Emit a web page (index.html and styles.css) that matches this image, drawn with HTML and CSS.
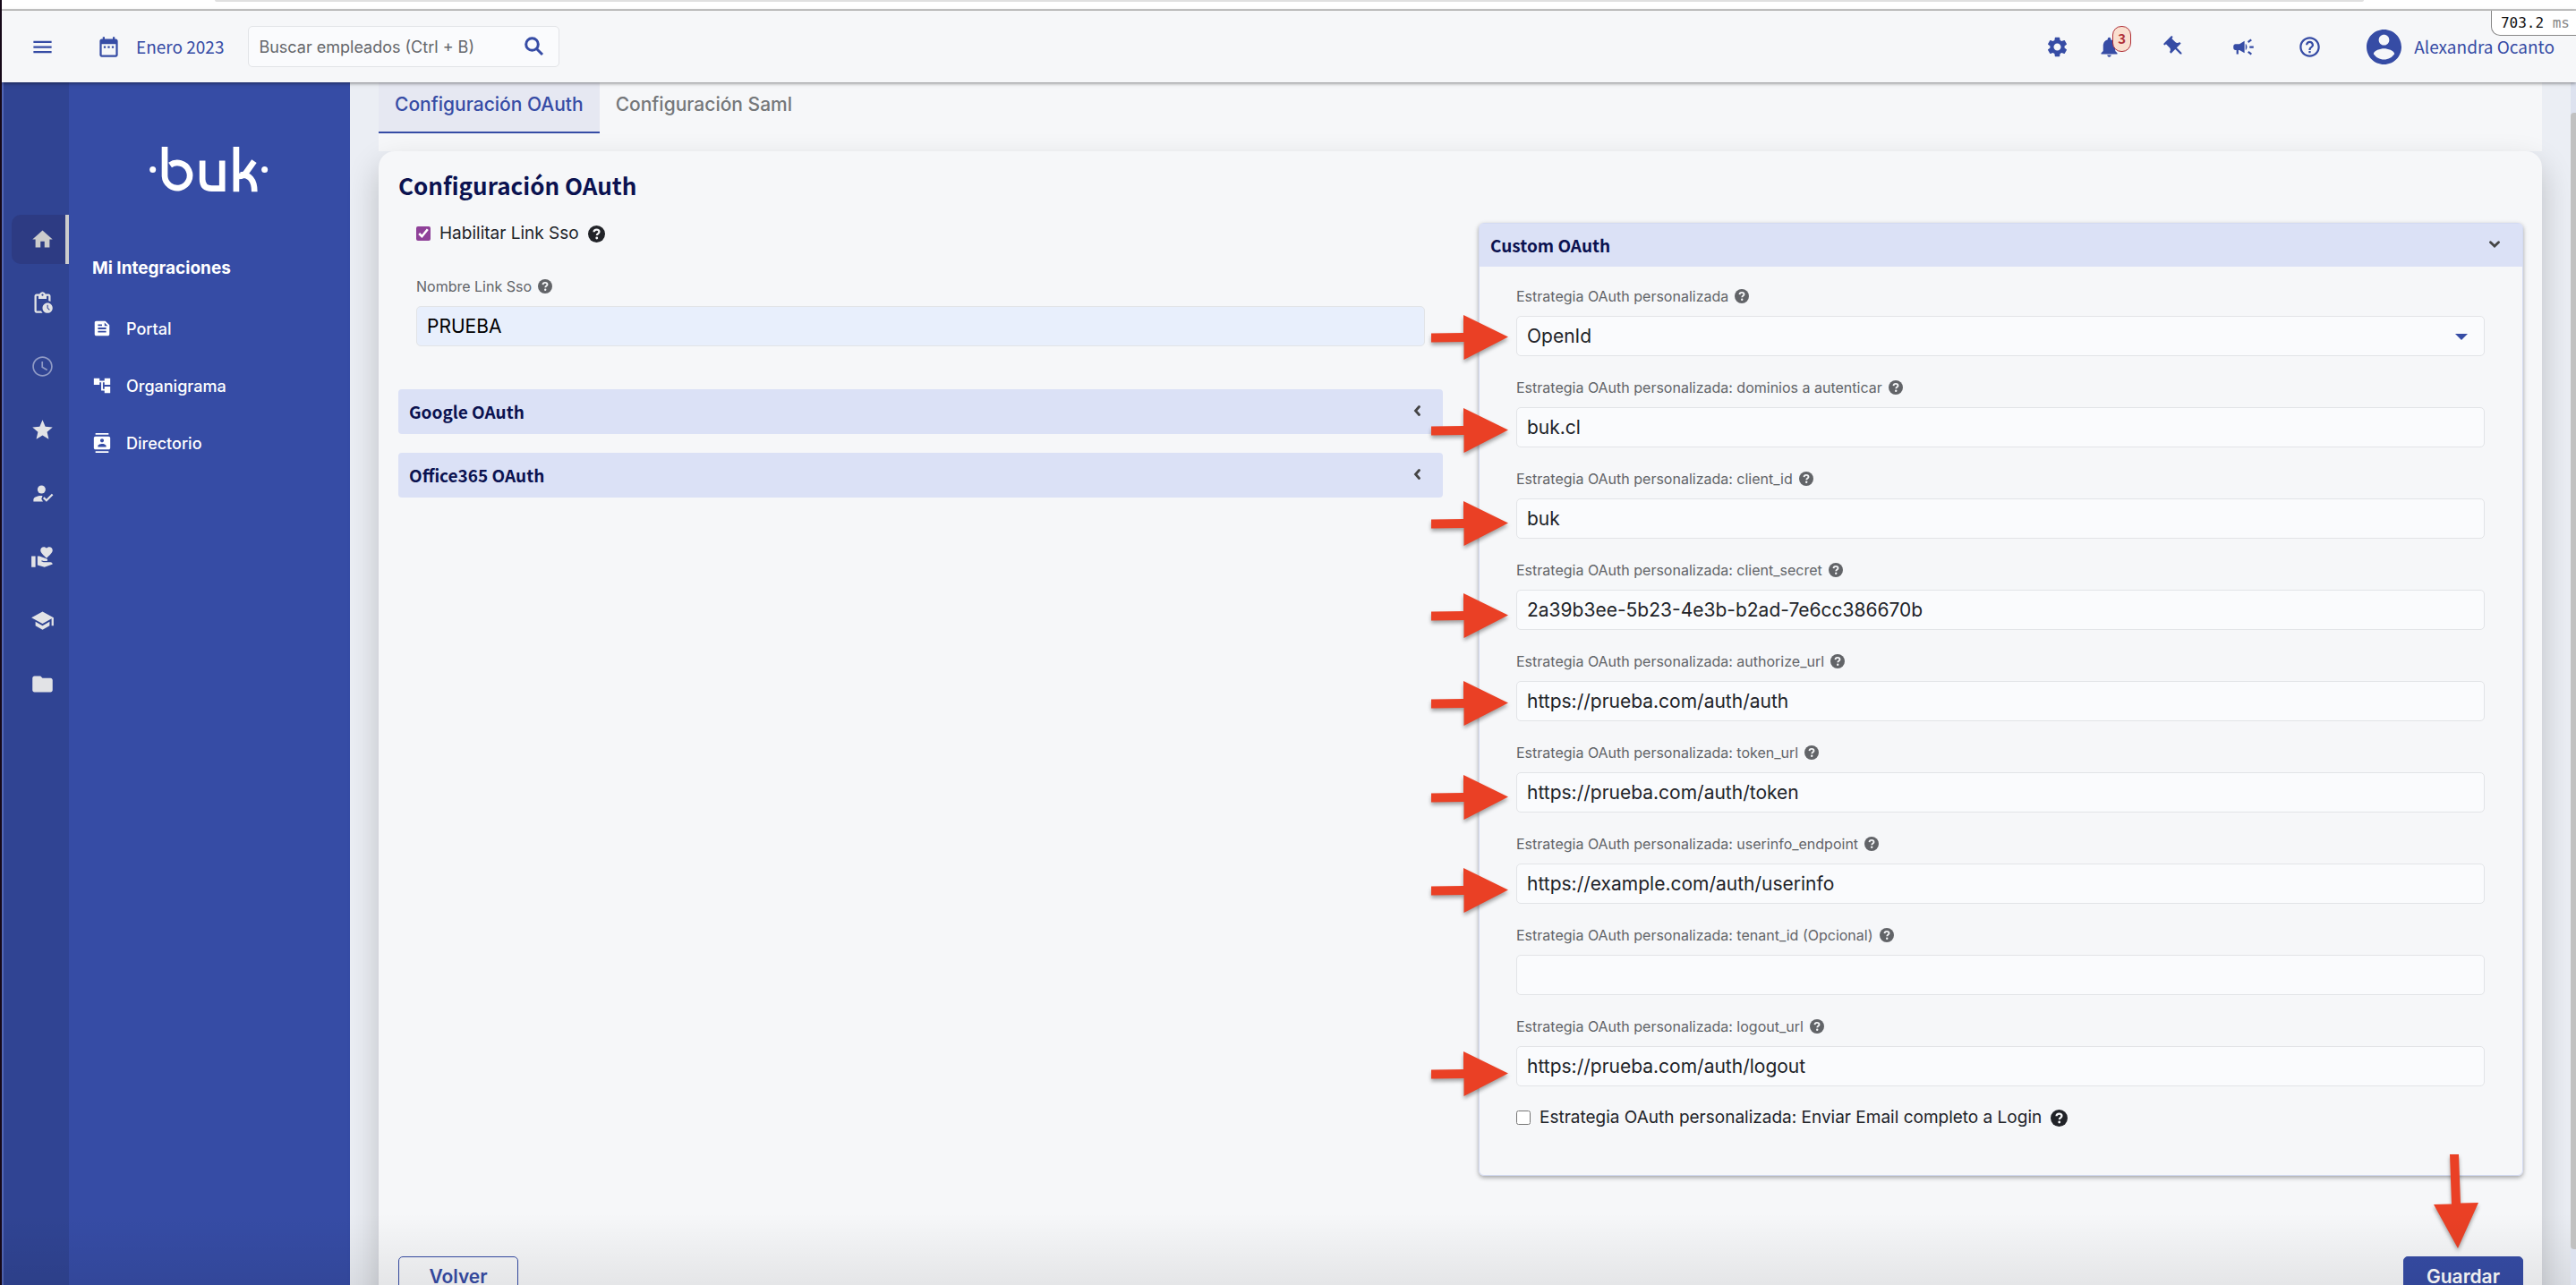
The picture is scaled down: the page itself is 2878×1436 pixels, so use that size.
FILE: index.html
```html
<!DOCTYPE html>
<html lang="es">
<head>
<meta charset="utf-8">
<meta name="viewport" content="width=device-width, initial-scale=1">
<title>Configuración OAuth</title>
<link rel="stylesheet" href="styles.css">
</head>
<body>
<svg class="sprite" aria-hidden="true">
  <symbol id="help" viewBox="0 0 16 16"><circle cx="8" cy="8" r="8" fill="currentColor"/><path d="M5.5 6.1C5.6 4.6 6.600 3.900 8 3.900c1.500 0 2.500.8 2.500 2 0 1.700-2.200 1.700-2.200 3.300" fill="none" stroke="#f6f7f9" stroke-width="1.900"/><circle cx="8.200" cy="11.800" r="1.200" fill="#f6f7f9"/></symbol>
  <symbol id="chevron-left" viewBox="0 0 8 12"><path d="M6.500 1.500 2.500 6l4 4.500" fill="none" stroke="currentColor" stroke-width="2.800" stroke-linecap="round"/></symbol>
  <symbol id="chevron-down" viewBox="0 0 12 8"><path d="M1.500 1.800 6 6l4.500-4.200" fill="none" stroke="currentColor" stroke-width="2.800" stroke-linecap="round"/></symbol>
  <symbol id="arrow" viewBox="0 0 86 50"><path d="M0 20.500 36 20V0l50 24.500L36.500 50V30L0 30.500z" fill="#ea4025"/></symbol>
</svg>
<div class="chrome"><div class="address-edge"></div></div>
<header class="topbar">
  <button class="icon-button menu" type="button" aria-label="Menú"><svg class="icon" viewBox="0 0 24 24"><path d="M3 18h18v-2H3v2zm0-5h18v-2H3v2zm0-7v2h18V6H3z"/></svg></button>
  <a class="period" href="#"><svg class="icon" viewBox="0 0 24 24"><path d="M9 11H7v2h2v-2zm4 0h-2v2h2v-2zm4 0h-2v2h2v-2zm2-7h-1V2h-2v2H8V2H6v2H5c-1.110 0-1.990.9-1.990 2L3 20c0 1.100.89 2 2 2h14c1.100 0 2-.9 2-2V6c0-1.100-.9-2-2-2zm0 16H5V9h14v11z"/></svg><span>Enero 2023</span></a>
  <form class="search">
    <input type="search" aria-label="Buscar empleados" placeholder="Buscar empleados (Ctrl + B)">
    <button class="icon-button" type="button" aria-label="Buscar"><svg class="glass" viewBox="0 0 22 22"><circle cx="8.500" cy="8.500" r="6.800"/><path d="m13.500 13.500 6.500 6.500"/></svg></button>
  </form>
  <nav class="actions">
    <button class="icon-button" type="button" aria-label="Ajustes"><svg class="icon" viewBox="0 0 24 24"><path d="M19.140 12.940c.04-.3.06-.61.06-.94 0-.32-.02-.64-.07-.94l2.030-1.580c.18-.14.23-.41.12-.61l-1.920-3.320c-.12-.22-.37-.29-.59-.22l-2.390.96c-.5-.38-1.030-.7-1.620-.94l-.36-2.540c-.04-.24-.24-.41-.48-.41h-3.840c-.24 0-.43.17-.47.41l-.36 2.540c-.59.24-1.130.57-1.620.94l-2.390-.96c-.22-.08-.47 0-.59.22L2.740 8.870c-.12.21-.08.47.12.61l2.030 1.580c-.05.3-.09.63-.09.94s.02.64.07.94l-2.030 1.580c-.18.14-.23.41-.12.61l1.920 3.320c.12.22.37.29.59.22l2.390-.96c.5.38 1.030.7 1.620.94l.36 2.540c.05.24.24.41.48.41h3.840c.24 0 .44-.17.47-.41l.36-2.540c.59-.24 1.130-.56 1.620-.94l2.390.96c.22.08.47 0 .59-.22l1.920-3.320c.12-.22.07-.47-.12-.61l-2.010-1.580zM12 15.600c-1.980 0-3.600-1.620-3.600-3.600s1.620-3.600 3.600-3.600 3.600 1.620 3.600 3.600-1.620 3.600-3.600 3.600z"/></svg></button>
    <button class="icon-button bell" type="button" aria-label="Notificaciones"><svg class="icon" viewBox="0 0 24 24"><path d="M12 22c1.100 0 2-.9 2-2h-4c0 1.100.89 2 2 2zm6-6v-5c0-3.070-1.640-5.640-4.500-6.320V4c0-.83-.67-1.500-1.500-1.500s-1.500.67-1.500 1.500v.68C7.630 5.360 6 7.920 6 11v5l-2 2v1h16v-1l-2-2z"/></svg><span class="badge">3</span></button>
    <button class="icon-button pin" type="button" aria-label="Fijar"><svg class="icon" viewBox="0 0 24 24"><path transform="rotate(-45 12 12)" d="M16 9V4h1c.55 0 1-.45 1-1s-.45-1-1-1H7c-.55 0-1 .45-1 1s.45 1 1 1h1v5c0 1.660-1.340 3-3 3v2h5.970v7l1 1 1-1v-7H19v-2c-1.660 0-3-1.340-3-3z"/></svg></button>
    <button class="icon-button mega" type="button" aria-label="Novedades"><svg class="icon" viewBox="0 0 24 24"><path d="M18 11v2h4v-2h-4zM16 17.610c.96.71 2.210 1.650 3.200 2.390.4-.53.8-1.070 1.200-1.600-.99-.74-2.240-1.680-3.200-2.400-.4.540-.8 1.080-1.200 1.610zM20.400 5.600c-.4-.53-.8-1.070-1.200-1.600-.99.740-2.240 1.680-3.200 2.400.4.530.8 1.070 1.200 1.600.96-.72 2.210-1.650 3.200-2.400zM4 9c-1.100 0-2 .9-2 2v2c0 1.100.9 2 2 2h1v4h2v-4h1l5 3V6L8 9H4zM15.500 12c0-1.330-.58-2.530-1.500-3.350v6.690c.92-.81 1.500-2.010 1.500-3.340z"/></svg></button>
    <button class="icon-button ask" type="button" aria-label="Ayuda"><svg class="icon" viewBox="0 0 24 24"><path d="M11 18h2v-2h-2v2zm1-16C6.480 2 2 6.480 2 12s4.480 10 10 10 10-4.480 10-10S17.520 2 12 2zm0 18c-4.410 0-8-3.590-8-8s3.590-8 8-8 8 3.590 8 8-3.590 8-8 8zm0-14c-2.210 0-4 1.790-4 4h2c0-1.100.9-2 2-2s2 .9 2 2c0 2-3 1.750-3 5h2c0-2.250 3-2.500 3-5 0-2.210-1.790-4-4-4z"/></svg></button>
    <a class="user" href="#"><svg class="avatar" viewBox="2 2 20 20"><path d="M12 2C6.480 2 2 6.480 2 12s4.480 10 10 10 10-4.480 10-10S17.520 2 12 2zm0 3c1.660 0 3 1.340 3 3s-1.340 3-3 3-3-1.340-3-3 1.340-3 3-3zm0 14.200c-2.500 0-4.710-1.280-6-3.220.03-1.990 4-3.080 6-3.080 1.990 0 5.970 1.090 6 3.080-1.290 1.940-3.500 3.220-6 3.220z"/></svg><span>Alexandra Ocanto</span></a>
  </nav>
  <div class="timing">703.2 <span>ms</span></div>
</header>
<div class="body">
  <nav class="rail" aria-label="Módulos">
    <a class="active" href="#" aria-label="Inicio"><svg class="icon" viewBox="0 0 24 24"><path d="M10 20v-6h4v6h5v-8h3L12 3 2 12h3v8z"/></svg></a>
    <a href="#" aria-label="Pendientes"><svg class="icon" viewBox="0 0 24 24"><path d="M17 12c-2.760 0-5 2.240-5 5s2.240 5 5 5 5-2.240 5-5-2.240-5-5-5zm1.650 7.350L16.500 17.200V14h1v2.790l1.850 1.850-.7.710zM18 3h-3.180C14.400 1.840 13.300 1 12 1s-2.400.84-2.820 2H6c-1.100 0-2 .9-2 2v15c0 1.100.9 2 2 2h6.110c-.59-.57-1.070-1.250-1.420-2H6V5h2v3h8V5h2v5.080c.71.1 1.380.31 2 .6V5c0-1.100-.9-2-2-2zm-6 2c-.55 0-1-.45-1-1s.45-1 1-1 1 .45 1 1-.45 1-1 1z"/></svg></a>
    <a class="dim" href="#" aria-label="Asistencia"><svg class="icon" viewBox="0 0 24 24"><path d="M11.990 2C6.470 2 2 6.480 2 12s4.470 10 9.990 10C17.520 22 22 17.520 22 12S17.520 2 11.990 2zM12 20.500c-4.700 0-8.500-3.800-8.500-8.500s3.800-8.500 8.500-8.500 8.500 3.800 8.500 8.500-3.800 8.500-8.500 8.500zM12.500 7H11v6l5.250 3.150.75-1.230-4.500-2.670z"/></svg></a>
    <a href="#" aria-label="Desempeño"><svg class="icon" viewBox="0 0 24 24"><path d="M12 17.270 18.180 21l-1.640-7.030L22 9.240l-7.190-.61L12 2 9.190 8.630 2 9.240l5.460 4.730L5.820 21z"/></svg></a>
    <a href="#" aria-label="Selección"><svg class="icon" viewBox="0 0 24 24"><circle cx="11" cy="8" r="4"/><path d="M12 14.200c-4-.4-9 1.200-9 3.800v2h9.500l-1.600-2.500zM22.600 13.600l-1.400-1.400-5.300 5.300-2.100-2.100-1.400 1.400 3.500 3.500z"/></svg></a>
    <a href="#" aria-label="Beneficios"><svg class="icon" viewBox="0 0 24 24"><path d="M1 11h4v11H1zM16 3.250C16.650 2.490 17.660 2 18.700 2 20.550 2 22 3.450 22 5.300c0 2.270-2.910 4.900-6 7.700-3.090-2.810-6-5.440-6-7.700C10 3.450 11.450 2 13.300 2c1.040 0 2.050.49 2.700 1.250zM20 17h-7l-2.090-.73.33-.94L13 16h2.820c.65 0 1.180-.53 1.180-1.180 0-.49-.31-.93-.77-1.110L8.970 11H7v9.020L14 22l8.010-3c-.01-1.100-.9-2-2.010-2z"/></svg></a>
    <a href="#" aria-label="Capacitación"><svg class="icon" viewBox="0 0 24 24"><path d="M5 13.180v4L12 21l7-3.820v-4L12 17l-7-3.820zM12 3 1 9l11 6 9-4.910V17h2V9L12 3z"/></svg></a>
    <a href="#" aria-label="Documentos"><svg class="icon" viewBox="0 0 24 24"><path d="M10 4H4c-1.100 0-1.990.9-1.990 2L2 18c0 1.100.9 2 2 2h16c1.100 0 2-.9 2-2V8c0-1.100-.9-2-2-2h-8l-2-2z"/></svg></a>
  </nav>
  <aside class="sidebar">
    <svg class="logo" viewBox="80 72 398 152" role="img" aria-label="buk"><g fill="none" stroke="#fff" stroke-width="20"><path d="M131 72v98a42 42 0 1 0 18-37"/><path d="M257 118v62q0 31 31 31h35v-93"/><path d="M370 72v150M430 120l-27 38q-8 12-24 12M384 166c30-2 47 16 47 56"/></g><circle cx="91" cy="148" r="10.500" fill="#fff"/><circle cx="465" cy="148" r="10.500" fill="#fff"/></svg>
    <h2>Mi Integraciones</h2>
    <ul>
      <li><a href="#"><svg class="small-icon" viewBox="0 0 24 24"><path d="M16 3H5c-1.100 0-2 .9-2 2v14c0 1.100.9 2 2 2h14c1.100 0 2-.9 2-2V8l-5-5zM7 7h5v2H7V7zm10 10H7v-2h10v2zm0-4H7v-2h10v2zm-2-4V5l4 4h-4z"/></svg>Portal</a></li>
      <li><a href="#"><svg class="small-icon" viewBox="0 0 24 24"><path d="M22 11V3h-7v3H9V3H2v8h7V8h2v10h4v3h7v-8h-7v3h-2V8h2v3z"/></svg>Organigrama</a></li>
      <li><a href="#"><svg class="small-icon" viewBox="0 0 24 24"><path d="M20 0H4v2h16V0zM4 24h16v-2H4v2zM20 4H4c-1.100 0-2 .9-2 2v12c0 1.100.9 2 2 2h16c1.100 0 2-.9 2-2V6c0-1.100-.9-2-2-2zm-8 2.750c1.240 0 2.250 1.010 2.250 2.250s-1.010 2.250-2.250 2.250S9.750 10.240 9.750 9 10.760 6.750 12 6.750zM17 17H7v-1.500c0-1.670 3.330-2.500 5-2.500s5 .83 5 2.500V17z"/></svg>Directorio</a></li>
    </ul>
  </aside>
  <main>
    <div class="tabs" role="tablist">
      <button class="tab selected" type="button" role="tab" aria-selected="true">Configuración OAuth</button>
      <button class="tab" type="button" role="tab" aria-selected="false">Configuración Saml</button>
    </div>
    <form class="card">
      <h1>Configuración OAuth</h1>
      <div class="columns">
        <div class="column">
          <div class="sso">
            <div class="check"><input id="sso" type="checkbox" checked><label for="sso">Habilitar Link Sso</label><svg class="help-large"><use href="#help"/></svg></div>
            <div class="field"><div class="label"><label for="nombre">Nombre Link Sso</label><svg class="help"><use href="#help"/></svg></div><input class="autofilled" id="nombre" type="text" value="PRUEBA"></div>
          </div>
          <button class="bar" type="button" aria-expanded="false">Google OAuth<svg class="chevron-left"><use href="#chevron-left"/></svg></button>
          <button class="bar" type="button" aria-expanded="false">Office365 OAuth<svg class="chevron-left"><use href="#chevron-left"/></svg></button>
        </div>
        <section class="panel">
          <button class="bar" type="button" aria-expanded="true">Custom OAuth<svg class="chevron-down"><use href="#chevron-down"/></svg></button>
          <div class="fields">
            <div class="field"><div class="label"><label for="estrategia">Estrategia OAuth personalizada</label><svg class="help"><use href="#help"/></svg></div><div class="select"><select id="estrategia"><option>OpenId</option></select><svg class="caret" viewBox="0 0 14 7"><path d="M0 0h14L7 7z"/></svg></div></div>
            <div class="field"><div class="label"><label for="dominios">Estrategia OAuth personalizada: dominios a autenticar</label><svg class="help"><use href="#help"/></svg></div><input id="dominios" type="text" value="buk.cl"></div>
            <div class="field"><div class="label"><label for="client-id">Estrategia OAuth personalizada: client_id</label><svg class="help"><use href="#help"/></svg></div><input id="client-id" type="text" value="buk"></div>
            <div class="field"><div class="label"><label for="client-secret">Estrategia OAuth personalizada: client_secret</label><svg class="help"><use href="#help"/></svg></div><input id="client-secret" type="text" value="2a39b3ee-5b23-4e3b-b2ad-7e6cc386670b"></div>
            <div class="field"><div class="label"><label for="authorize-url">Estrategia OAuth personalizada: authorize_url</label><svg class="help"><use href="#help"/></svg></div><input id="authorize-url" type="text" value="https://prueba.com/auth/auth"></div>
            <div class="field"><div class="label"><label for="token-url">Estrategia OAuth personalizada: token_url</label><svg class="help"><use href="#help"/></svg></div><input id="token-url" type="text" value="https://prueba.com/auth/token"></div>
            <div class="field"><div class="label"><label for="userinfo">Estrategia OAuth personalizada: userinfo_endpoint</label><svg class="help"><use href="#help"/></svg></div><input id="userinfo" type="text" value="https://example.com/auth/userinfo"></div>
            <div class="field"><div class="label"><label for="tenant-id">Estrategia OAuth personalizada: tenant_id (Opcional)</label><svg class="help"><use href="#help"/></svg></div><input id="tenant-id" type="text" value=""></div>
            <div class="field"><div class="label"><label for="logout-url">Estrategia OAuth personalizada: logout_url</label><svg class="help"><use href="#help"/></svg></div><input id="logout-url" type="text" value="https://prueba.com/auth/logout"></div>
            <div class="check"><input id="email" type="checkbox"><label for="email">Estrategia OAuth personalizada: Enviar Email completo a Login</label><svg class="help-large"><use href="#help"/></svg></div>
          </div>
          <svg class="arrow a1"><use href="#arrow"/></svg>
          <svg class="arrow a2"><use href="#arrow"/></svg>
          <svg class="arrow a3"><use href="#arrow"/></svg>
          <svg class="arrow a4"><use href="#arrow"/></svg>
          <svg class="arrow a5"><use href="#arrow"/></svg>
          <svg class="arrow a6"><use href="#arrow"/></svg>
          <svg class="arrow a7"><use href="#arrow"/></svg>
          <svg class="arrow a8"><use href="#arrow"/></svg>
          <svg class="arrow-down" viewBox="0 0 50 105"><path d="M18 0h10l2 54.500 20-.5L27 105 0 56l20-.5z" fill="#ea4025"/></svg>
        </section>
      </div>
      <div class="footer"><button class="button" type="button">Volver</button><button class="button primary" type="submit">Guardar</button></div>
    </form>
  </main>
  <div class="fade"></div>
  <div class="scrollbar"><div class="thumb"></div></div>
</div>
</body>
</html>
```
FILE: styles.css
```css
:root {
  --blue: #364ca5;
  --navy: #0b1250;
  --surface: #f6f7f9;
  --lavender: #dbe1f6;
  --source: "Noto Sans CJK SC", "Noto Sans", sans-serif;
  --inter: Inter, "Liberation Sans", sans-serif;
}

* { box-sizing: border-box; }

body {
  margin: 0;
  height: 100vh;
  display: flex;
  flex-direction: column;
  overflow: hidden;
  border-left: 2px solid #150818;
  background: #ebeef4;
  color: #212328;
  font-family: var(--inter);
}

button, input, select { font: inherit; color: inherit; margin: 0; }
button { border: 0; background: none; padding: 0; }
a { color: inherit; text-decoration: none; }
svg { display: block; flex: none; overflow: visible; }
.sprite { position: absolute; width: 0; height: 0; }

.chrome { flex: none; height: 12px; background: #fff; border-bottom: 2px solid #ccc; }
.address-edge { height: 2px; margin: 0 237px 0 238px; background: #e0e0e0; border-radius: 0 0 8px 8px; }

.topbar {
  position: relative;
  z-index: 2;
  flex: none;
  height: 80px;
  display: flex;
  align-items: center;
  padding: 0 24px 0 32px;
  background: var(--surface);
  color: var(--blue);
  font-family: var(--source);
  font-size: 19px;
  box-shadow: 0 1px 4px rgba(0, 0, 0, .5);
}
.icon { width: 27px; height: 27px; fill: currentColor; }
.icon-button { display: flex; }
.period { display: flex; align-items: center; gap: 17px; margin: 0 27px 0 47px; }
.period span, .user span { padding-bottom: 2px; }
.search {
  width: 348px;
  height: 46px;
  display: flex;
  align-items: center;
  padding: 0 16px 0 11px;
  border: 1px solid #e2e4e7;
  border-radius: 5px;
  background: #fafbfd;
  font-family: var(--inter);
  font-size: 18px;
}
.search input { flex: 1; min-width: 0; border: 0; padding: 0; background: none; outline: 0; }
.search input::placeholder { color: #65676b; opacity: 1; }
.glass { width: 22px; height: 22px; fill: none; stroke: currentColor; stroke-width: 3; }
.actions { margin-left: auto; display: flex; align-items: center; }
.bell { position: relative; margin-left: 31px; }
.badge {
  position: absolute;
  left: 17px;
  top: -10px;
  width: 21px;
  height: 29px;
  border: 1px solid #b03038;
  border-radius: 10px;
  background: #f9dfcf;
  color: #b0323a;
  font-size: 15px;
  font-weight: 700;
  line-height: 25px;
  text-align: center;
}
.pin { margin-left: 46px; }
.mega { margin-left: 50px; }
.ask { margin-left: 47px; }
.user { margin-left: 50px; display: flex; align-items: center; gap: 14px; }
.avatar { width: 39px; height: 39px; fill: currentColor; }
.timing {
  position: absolute;
  right: 0;
  top: 0;
  padding: 0 7px 0 10px;
  border: 1px solid #888;
  border-width: 0 0 1px 1px;
  border-radius: 0 0 0 10px;
  background: #fff;
  color: #111;
  font: 16px/27px "DejaVu Sans Mono", monospace;
}
.timing span { color: #888; }

.body { position: relative; flex: 1; min-height: 0; display: flex; }
.rail {
  flex: none;
  width: 75px;
  display: flex;
  flex-direction: column;
  gap: 16px;
  padding-top: 148px;
  border-left: 2px solid #5266b4;
  background: #304493;
  color: #e2e3e6;
}
.rail a { height: 55px; display: flex; align-items: center; margin-left: 9px; padding-left: 21px; }
.rail .active { border-right: 4px solid #ccc; border-radius: 10px 0 0 10px; background: #2d3b83; color: #ccc; }
.rail .dim { color: #8f9ac5; }

.sidebar { flex: none; width: 314px; padding: 72px 26px 0; background: var(--blue); color: #fff; }
.logo { width: 133px; height: 51px; margin-left: 64px; }
.sidebar h2 { margin: 72px 0 22px; font-size: 19px; line-height: 26px; }
.sidebar ul { list-style: none; margin: 0; padding: 0; }
.sidebar a { height: 64px; display: flex; align-items: center; gap: 16px; font-size: 18px; font-weight: 500; }
.small-icon { width: 22px; height: 22px; fill: currentColor; }

main { flex: 1; min-width: 0; padding: 0 38px 0 32px; }
.tabs { display: flex; height: 77px; align-items: flex-start; background: var(--surface); }
.tab {
  padding: 12px 18px 17px;
  border-bottom: 2px solid transparent;
  color: #75777a;
  font-size: 21px;
  font-weight: 500;
  line-height: 26px;
}
.tab.selected { border-color: var(--blue); background: #e6e8f2; color: var(--blue); }

.card {
  padding: 19px 21px 40px 22px;
  border-radius: 18px;
  background: var(--surface);
  box-shadow: 0 16px 36px rgba(0, 0, 0, .2);
}
h1 { margin: 0; color: var(--navy); font-family: var(--source); font-size: 26px; line-height: 38px; }
.columns { display: grid; grid-template-columns: 1fr 1fr; gap: 40px; margin-top: 23px; }
.column { display: flex; flex-direction: column; gap: 21px; }
.sso { padding: 0 20px 27px; }
.check { display: flex; align-items: center; gap: 10px; font-size: 19px; line-height: 24px; }
.check input { width: 16px; height: 16px; accent-color: #8f4199; }
.help { width: 16px; height: 16px; }
.help-large { width: 19px; height: 19px; }
.sso .field { margin-top: 35px; }
.label { display: flex; align-items: center; gap: 7px; margin-bottom: 10px; color: #626468; font-size: 16px; line-height: 24px; }
.field input, .field select {
  display: block;
  width: 100%;
  height: 45px;
  padding: 0 11px;
  border: 1px solid #e2e4e7;
  border-radius: 5px;
  background: #fafbfd;
  font-size: 21px;
  outline: 0;
}
.field .autofilled { background: #e8effc; color: #000; }
.select { position: relative; }
.field select { appearance: none; }
.caret { position: absolute; right: 19px; top: 20px; width: 14px; height: 7px; fill: var(--blue); }

.bar {
  width: 100%;
  height: 50px;
  display: flex;
  align-items: center;
  justify-content: space-between;
  padding: 0 25px 2px 12px;
  border-radius: 4px;
  background: var(--lavender);
  color: var(--navy);
  font-family: var(--source);
  font-size: 19px;
  font-weight: 700;
}
.bar svg { color: #454545; }
.chevron-left { width: 8px; height: 12px; }
.chevron-down { width: 12px; height: 8px; }
.panel {
  position: relative;
  border: 1px solid #d3daf2;
  border-radius: 6px;
  box-shadow: 0 2px 5px rgba(0, 0, 0, .35);
}
.panel .bar { height: 48px; border-radius: 4px 4px 0 0; }
.fields { display: flex; flex-direction: column; gap: 23px; padding: 21px 42px 52px 41px; }

.arrow { position: absolute; left: -54px; width: 86px; height: 50px; filter: drop-shadow(0 3px 2px rgba(0, 0, 0, .35)); }
.a1 { top: 102px; }
.a2 { top: 206px; }
.a3 { top: 310px; }
.a4 { top: 413px; }
.a5 { top: 511px; }
.a6 { top: 616px; }
.a7 { top: 720px; }
.a8 { top: 925px; }
.arrow-down { position: absolute; right: 49px; top: 1040px; width: 50px; height: 105px; filter: drop-shadow(0 3px 2px rgba(0, 0, 0, .35)); }

.footer { display: flex; justify-content: space-between; margin-top: 90px; }
.button {
  width: 134px;
  height: 45px;
  border: 1px solid var(--blue);
  border-radius: 5px;
  color: var(--blue);
  font-size: 21px;
  font-weight: 600;
}
.primary { background: var(--blue); color: #fff; }

.fade {
  position: absolute;
  left: 0;
  right: 0;
  bottom: 0;
  height: 80px;
  background: linear-gradient(rgba(0, 0, 0, 0), rgba(0, 0, 0, .07));
  pointer-events: none;
}
.scrollbar { position: absolute; right: 0; top: 0; bottom: 0; width: 6px; padding: 34px 0 40px; background: #dde2ef; }
.thumb { height: 100%; border-radius: 4px 0 0 4px; background: #c1c1c1; }
```
